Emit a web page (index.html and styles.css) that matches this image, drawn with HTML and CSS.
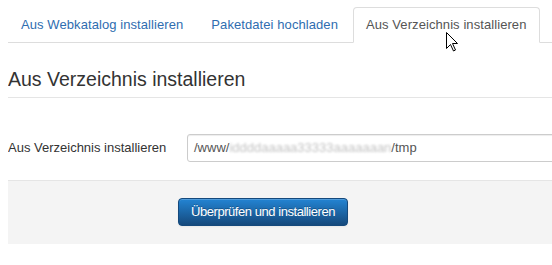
FILE: index.html
```html
<!DOCTYPE html>
<html lang="de">
<head>
    <meta charset="UTF-8">
    <meta name="viewport" content="width=device-width, initial-scale=1.0">
    <title>Erweiterungen: Installieren</title>
    <link rel="stylesheet" href="styles.css">
</head>
<body>
    <ul class="nav-tabs">
        <li><a href="#web">Aus Webkatalog installieren</a></li>
        <li><a href="#upload">Paketdatei hochladen</a></li>
        <li class="active"><a href="#folder">Aus Verzeichnis installieren</a></li>
        <li><a href="#url" class="tab-more"></a></li>
    </ul>

    <form class="install-form">
        <legend>Aus Verzeichnis installieren</legend>

        <div class="control-group">
            <label class="control-label" for="install_directory">Aus Verzeichnis installieren</label>
            <div class="input-box" id="install_directory">/www/<span class="blurred">iddddaaaaa33333aaaaaaan</span>/tmp</div>
        </div>

        <div class="form-actions">
            <button type="button" class="btn-primary">Überprüfen und installieren</button>
        </div>
    </form>

    <svg class="cursor" xmlns="http://www.w3.org/2000/svg" viewBox="0 0 12 20" width="12" height="20">
        <path d="M0.5 0.5 L0.5 16.5 L4.5 12.5 L7.5 19 L9.5 18 L6.5 11.5 L11.5 11.5 Z" fill="#fff" stroke="#000" stroke-width="1" stroke-linejoin="miter"></path>
    </svg>
</body>
</html>
```

FILE: styles.css
```css
body {
    font-family: 'Liberation Sans', Arial, sans-serif;
    font-size: 13px;
    line-height: 18px;
    color: #333;
    background-color: #fff;
    margin: 7px 0 0 8px;
    overflow: hidden;
    position: relative;
}

.nav-tabs {
    display: flex;
    flex-wrap: nowrap;
    list-style: none;
    margin: 0 0 18px;
    padding: 0;
    border-bottom: 1px solid #ddd;
}

.nav-tabs li {
    flex-shrink: 0;
    margin-bottom: -1px;
}

.nav-tabs a {
    display: block;
    height: 18px;
    padding: 8px 12px;
    margin-right: 2px;
    line-height: 18px;
    letter-spacing: 0.08px;
    color: #2f6db0;
    text-decoration: none;
    white-space: nowrap;
    border: 1px solid transparent;
    border-radius: 4px 4px 0 0;
}

.nav-tabs .active a {
    color: #555;
    background-color: #fff;
    border-color: #ddd #ddd transparent;
}

.nav-tabs .tab-more {
    width: 20px;
}

legend {
    display: block;
    width: 100%;
    padding: 0;
    margin-bottom: 18px;
    font-size: 19.5px;
    line-height: 36px;
    color: #333;
    border-bottom: 1px solid #e5e5e5;
}

.control-group {
    display: flex;
    align-items: center;
    padding-top: 18px;
}

.control-label {
    width: 179px;
    flex-shrink: 0;
}

.input-box {
    box-sizing: border-box;
    flex-shrink: 0;
    width: 420px;
    height: 28px;
    padding: 4px 6px;
    line-height: 18px;
    color: #555;
    white-space: nowrap;
    border: 1px solid #ccc;
    border-radius: 3px;
    box-shadow: inset 0 1px 1px rgba(0, 0, 0, 0.075);
}

.blurred {
    color: #c4c4c4;
    filter: blur(0.9px);
}

.form-actions {
    margin-top: 18px;
    padding: 17px 20px 18px 170px;
    background-color: #f4f4f4;
    border-top: 1px solid #e5e5e5;
}

.btn-primary {
    box-sizing: border-box;
    height: 28px;
    padding: 4px 12px;
    font-family: 'Liberation Sans', Arial, sans-serif;
    font-size: 13px;
    line-height: 18px;
    letter-spacing: -0.45px;
    color: #fff;
    text-shadow: 0 -1px 0 rgba(0, 0, 0, 0.25);
    background-color: #1d6cb0;
    background-image: linear-gradient(to bottom, #2384d3, #15497c);
    border: 1px solid #15497c;
    border-radius: 4px;
    box-shadow: inset 0 1px 0 rgba(255, 255, 255, 0.2), 0 1px 2px rgba(0, 0, 0, 0.05);
    cursor: pointer;
}

.cursor {
    position: absolute;
    left: 438px;
    top: 25px;
}
```
